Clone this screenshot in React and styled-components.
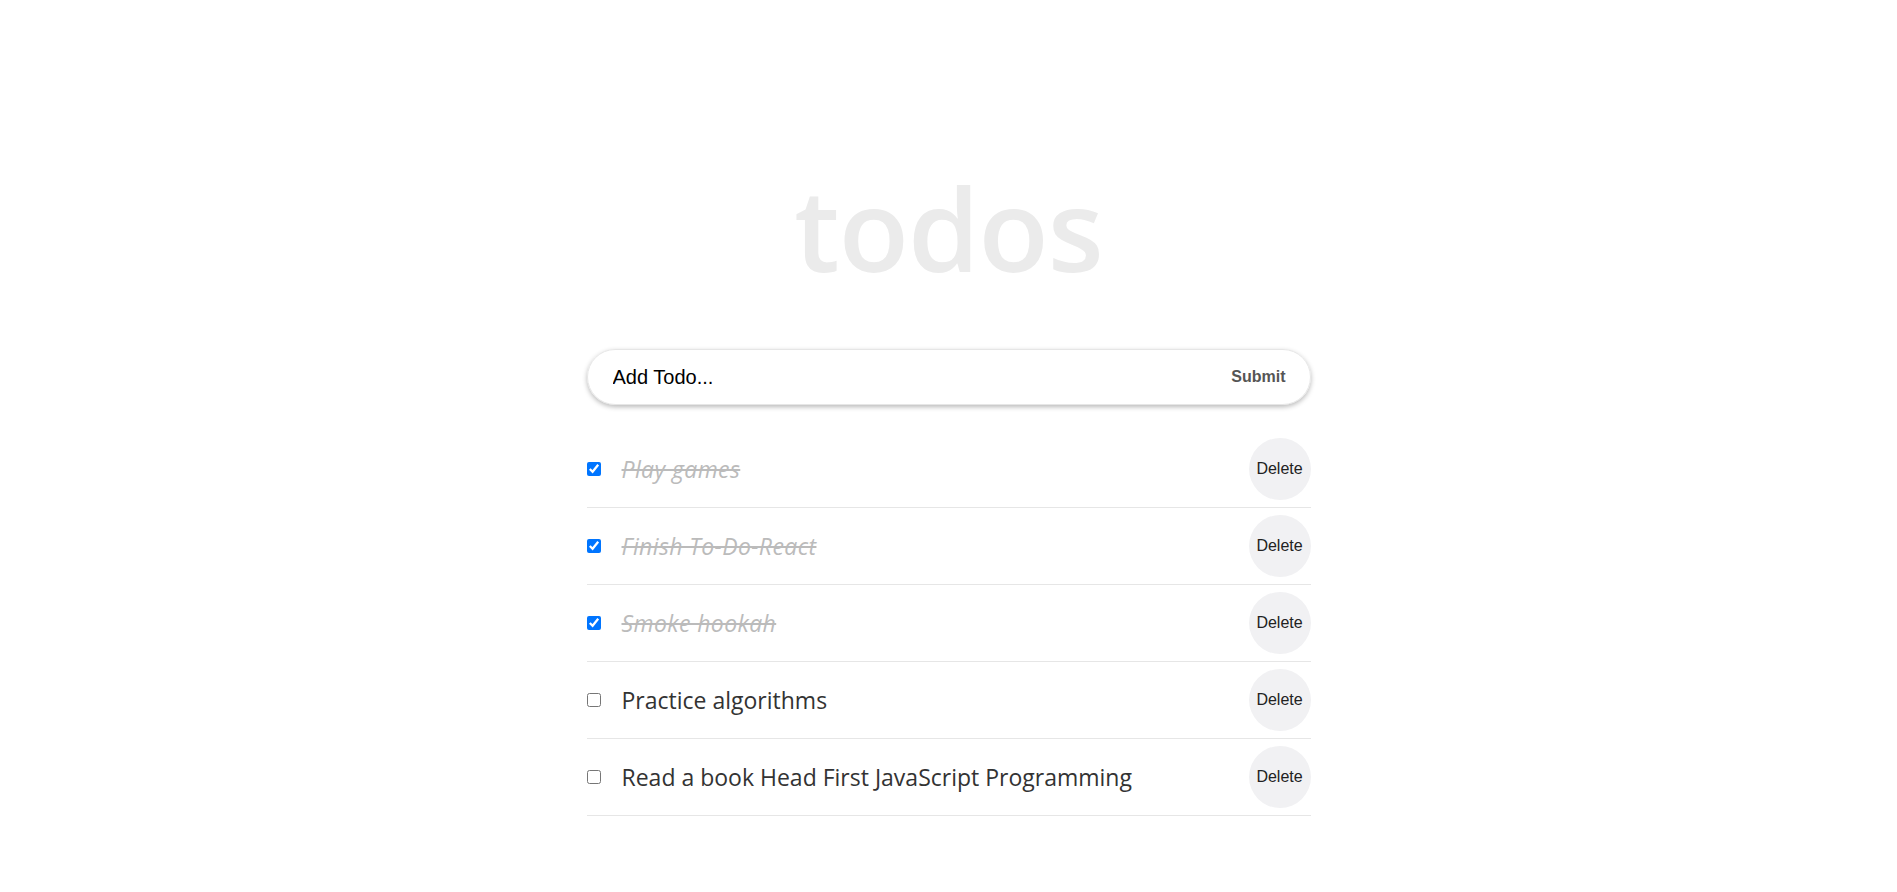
import React, { useState } from "react";
import styled, { createGlobalStyle } from "styled-components";

const GlobalStyle = createGlobalStyle`
  body {
    margin: 0;
    background: #fff;
    font-family: "Open Sans", "Noto Sans", sans-serif;
  }
`;

const Page = styled.div`
  width: 724px;
  margin: 0 auto;
  padding-top: 170px;
  display: flex;
  flex-direction: column;
`;

const Title = styled.h1`
  margin: 0;
  font-size: 115px;
  line-height: 1;
  font-weight: 600;
  color: #ebebeb;
  text-align: center;
  letter-spacing: -1px;
`;

const Form = styled.form`
  margin-top: 64px;
  height: 56px;
  box-sizing: border-box;
  display: flex;
  align-items: center;
  border: 1px solid #e6e6e6;
  border-radius: 28px;
  box-shadow: 0 2px 5px rgba(0, 0, 0, 0.28);
  padding: 0 24px 0 25px;
`;

const Input = styled.input`
  flex: 1;
  border: none;
  outline: none;
  background: transparent;
  font-family: "Liberation Sans", Arial, sans-serif;
  font-size: 20px;
  color: #000;
  padding: 0;
  &::placeholder {
    color: #000;
  }
`;

const Submit = styled.button`
  border: none;
  background: transparent;
  font-family: "Liberation Sans", Arial, sans-serif;
  font-size: 16px;
  font-weight: bold;
  color: #555;
  padding: 0;
  cursor: pointer;
`;

const List = styled.ul`
  list-style: none;
  margin: 26px 0 0;
  padding: 0;
`;

const Row = styled.li`
  display: flex;
  align-items: center;
  padding: 7px 0;
  border-bottom: 1px solid #e6e6e6;
`;

const Check = styled.input`
  width: 14px;
  height: 14px;
  margin: 0 21px 0 0;
  flex-shrink: 0;
`;

const Text = styled.span`
  flex: 1;
  font-size: 23px;
  color: ${(p) => (p.$done ? "#bbb" : "#333")};
  font-style: ${(p) => (p.$done ? "italic" : "normal")};
  text-decoration: ${(p) => (p.$done ? "line-through" : "none")};
  letter-spacing: ${(p) => (p.$done ? "0.4px" : "0")};
`;

const Delete = styled.button`
  width: 62px;
  height: 62px;
  border-radius: 50%;
  border: none;
  background: #f1f1f3;
  font-family: "Liberation Sans", Arial, sans-serif;
  font-size: 16px;
  color: #222;
  padding: 0;
  cursor: pointer;
`;

const initial = [
  { id: 1, text: "Play games", done: true },
  { id: 2, text: "Finish To-Do-React", done: true },
  { id: 3, text: "Smoke hookah", done: true },
  { id: 4, text: "Practice algorithms", done: false },
  { id: 5, text: "Read a book Head First JavaScript Programming", done: false },
];

export default function App() {
  const [todos, setTodos] = useState(initial);

  const toggle = (id) =>
    setTodos(todos.map((t) => (t.id === id ? { ...t, done: !t.done } : t)));

  return (
    <>
      <GlobalStyle />
      <Page>
        <Title>todos</Title>
        <Form onSubmit={(e) => e.preventDefault()}>
          <Input placeholder="Add Todo..." />
          <Submit type="submit">Submit</Submit>
        </Form>
        <List>
          {todos.map((t) => (
            <Row key={t.id}>
              <Check type="checkbox" checked={t.done} onChange={() => toggle(t.id)} />
              <Text $done={t.done}>{t.text}</Text>
              <Delete onClick={() => setTodos(todos.filter((x) => x.id !== t.id))}>
                Delete
              </Delete>
            </Row>
          ))}
        </List>
      </Page>
    </>
  );
}
